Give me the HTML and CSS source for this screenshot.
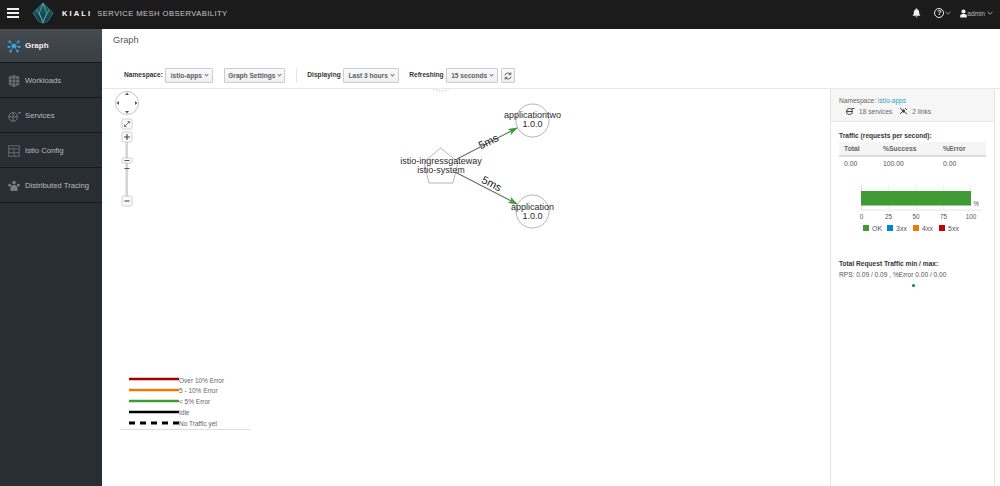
FILE: index.html
```html
<!DOCTYPE html>
<html lang="en">
<head>
    <meta charset="UTF-8">
    <meta name="viewport" content="width=device-width, initial-scale=1.0">
    <title>Kiali Console</title>
    <link rel="stylesheet" href="styles.css">
</head>
<body>
    <!-- Top bar -->
    <header class="topbar">
        <div class="hamburger"><span></span><span></span><span></span></div>
        <svg class="logo" width="22" height="22" viewBox="0 0 24 24">
            <defs>
                <linearGradient id="logoFill" x1="0" y1="0" x2="0" y2="1">
                    <stop offset="0" stop-color="#1d6a70"/>
                    <stop offset="1" stop-color="#16313a"/>
                </linearGradient>
            </defs>
            <path d="M12 1 L23 12 L17 21 L12 23 L7 21 L1 12 Z" fill="url(#logoFill)" stroke="#3a8c8f" stroke-width="0.8"/>
            <path d="M12 1 L8 12 L12 23 L16 12 Z M5 8 L12 21 L19 8" fill="none" stroke="#5fc0bc" stroke-width="0.7"/>
        </svg>
        <span class="brand">KIALI</span>
        <span class="brand-sub">SERVICE MESH OBSERVABILITY</span>
        <div class="topbar-right">
            <svg class="bell" width="9" height="10" viewBox="0 0 10 11">
                <path d="M5 0.5 C5.8 0.5 6 1 6 1.5 C7.5 2 8 3.2 8 5 C8 7 8.6 7.8 9.5 8.6 H0.5 C1.4 7.8 2 7 2 5 C2 3.2 2.5 2 4 1.5 C4 1 4.2 0.5 5 0.5 Z M3.8 9.4 H6.2 C6.1 10.2 5.6 10.6 5 10.6 C4.4 10.6 3.9 10.2 3.8 9.4 Z" fill="#f2f2f2"/>
            </svg>
            <span class="help">?</span>
            <svg class="caret help-caret" width="6" height="4" viewBox="0 0 6 4"><path d="M0.5 0.8 L3 3.2 L5.5 0.8" fill="none" stroke="#bbb" stroke-width="0.8"/></svg>
            <svg class="user" width="7" height="9" viewBox="0 0 9 11">
                <circle cx="4.5" cy="3" r="2.6" fill="#f2f2f2"/>
                <path d="M0.3 10.6 V8.4 C0.3 6.8 2 6 4.5 6 C7 6 8.7 6.8 8.7 8.4 V10.6 Z" fill="#f2f2f2"/>
            </svg>
            <span class="admin">admin</span>
            <svg class="caret" width="6" height="4" viewBox="0 0 6 4"><path d="M0.5 0.8 L3 3.2 L5.5 0.8" fill="none" stroke="#bbb" stroke-width="0.8"/></svg>
        </div>
    </header>

    <div class="layout">
        <!-- Menu kiri -->
        <nav class="sidebar">
            <a class="nav-item active">
                <svg width="16" height="16" viewBox="0 0 16 16">
                    <g stroke="#39a5dc" stroke-width="0.8"><path d="M8 8 L3 3 M8 8 L13 3 M8 8 L2 9 M8 8 L14 9 M8 8 L4 14 M8 8 L12 14"/></g>
                    <g fill="#39a5dc"><circle cx="8" cy="8" r="2.6"/><circle cx="3" cy="3" r="1.4"/><circle cx="13" cy="3" r="1.4"/><circle cx="2" cy="9" r="1.4"/><circle cx="14" cy="9" r="1.4"/><circle cx="4" cy="14" r="1.4"/><circle cx="12" cy="14" r="1.4"/></g>
                </svg>
                Graph
            </a>
            <a class="nav-item">
                <svg width="16" height="16" viewBox="0 0 16 16">
                    <path d="M8 1 L14 3 V12 L8 15 L2 12 V3 Z" fill="#6b7076"/>
                    <path d="M2 6 H14 M2 10 H14 M6 2 V14 M10 2 V14" stroke="#292e34" stroke-width="0.8"/>
                </svg>
                Workloads
            </a>
            <a class="nav-item">
                <svg width="16" height="16" viewBox="0 0 16 16" fill="none" stroke="#7b8086">
                    <circle cx="7" cy="9" r="5"/>
                    <path d="M2 9 H12 M7 4 V14"/>
                    <path d="M12.5 4.5 H16" stroke-width="1.4"/>
                </svg>
                Services
            </a>
            <a class="nav-item">
                <svg width="16" height="16" viewBox="0 0 16 16" fill="none" stroke="#6b7076">
                    <rect x="2" y="2" width="12" height="12"/>
                    <path d="M2 5.5 H14 M2 10 H14 M8 5.5 V14"/>
                </svg>
                Istio Config
            </a>
            <a class="nav-item">
                <svg width="16" height="16" viewBox="0 0 16 16" fill="#7b8086">
                    <circle cx="8" cy="4" r="2"/><circle cx="3" cy="7" r="1.6"/><circle cx="13" cy="7" r="1.6"/>
                    <path d="M8 6.5 C11 6.5 12.5 10 12 12.5 C11.5 14.5 9.5 13.5 8 13.5 C6.5 13.5 4.5 14.5 4 12.5 C3.5 10 5 6.5 8 6.5 Z"/>
                </svg>
                Distributed Tracing
            </a>
        </nav>

        <main class="content">
            <h1 class="page-title">Graph</h1>

            <!-- Toolbar -->
            <div class="toolbar">
                <label class="tb-label">Namespace:</label>
                <button class="select w-ns">istio-apps <i class="chev"></i></button>
                <button class="select w-settings">Graph Settings <i class="chev"></i></button>
                <span class="divider"></span>
                <label class="tb-label">Displaying</label>
                <button class="select w-display">Last 3 hours <i class="chev"></i></button>
                <label class="tb-label tb-refresh">Refreshing</label>
                <button class="select w-refresh">15 seconds <i class="chev"></i></button>
                <button class="select icon-btn">
                    <svg width="8" height="8" viewBox="0 0 8 8" fill="none" stroke="#555" stroke-width="0.9">
                        <path d="M1 3.4 A3 3 0 0 1 6.4 2.2 M7 4.6 A3 3 0 0 1 1.6 5.8"/>
                        <path d="M6.8 0.4 V2.6 H4.6 M1.2 7.6 V5.4 H3.4"/>
                    </svg>
                </button>
            </div>

            <div class="graph-area">
                <div class="canvas">
                    <svg class="graph" width="728" height="397" viewBox="102 89 728 397">
                        <defs>
                            <marker id="arrow" markerWidth="10" markerHeight="7" refX="9" refY="3.5" orient="auto" markerUnits="userSpaceOnUse">
                                <path d="M0 0 L10 3.5 L0 7 L2.5 3.5 Z" fill="#3f9c35"/>
                            </marker>
                        </defs>

                        <!-- node terpotong di atas -->
                        <circle cx="441" cy="76" r="15" fill="none" stroke="#bbb" stroke-dasharray="1.5 1.5"/>

                        <!-- panzoom -->
                        <circle cx="127" cy="103" r="11.5" fill="#fff" stroke="#c4c4c4"/>
                        <path d="M127 92.5 L129 95 H125 Z M127 113.5 L129 111 H125 Z M116.5 103 L119 101 V105 Z M137.5 103 L135 101 V105 Z" fill="#555"/>
                        <rect class="pz-btn" x="122" y="119" width="10" height="10" rx="1.5"/>
                        <path d="M124.5 126.5 L129.5 121.5 M124.5 124.5 V126.5 H126.5 M127.5 121.5 H129.5 V123.5" fill="none" stroke="#444" stroke-width="0.7"/>
                        <rect x="125.5" y="142" width="2.4" height="54" fill="#d2d2d2"/>
                        <rect class="pz-btn" x="122" y="132" width="10" height="10" rx="1.5"/>
                        <path d="M124 137 H130 M127 134 V140" stroke="#444" stroke-width="1.1"/>
                        <rect class="pz-btn" x="122" y="158" width="10" height="5" rx="1.5"/>
                        <path d="M124.5 160.5 H129.5 M124.5 168.5 H129.5" stroke="#555"/>
                        <rect class="pz-btn" x="122" y="196" width="10" height="10" rx="1.5"/>
                        <path d="M124.5 201 H129.5" stroke="#444" stroke-width="1.1"/>

                        <!-- edges -->
                        <line x1="457" y1="159" x2="517" y2="128" stroke="#5e7a5a" stroke-width="1.1" marker-end="url(#arrow)"/>
                        <line x1="455" y1="172" x2="517" y2="204" stroke="#5e7a5a" stroke-width="1.1" marker-end="url(#arrow)"/>

                        <!-- nodes -->
                        <path d="M440.5 148 L458 162 L453 183 L429 183 L424 162 Z" fill="none" stroke="#b5b5b5"/>
                        <circle cx="532.5" cy="120.5" r="16.5" fill="none" stroke="#b5b5b5"/>
                        <circle cx="532.5" cy="211.5" r="16.5" fill="none" stroke="#b5b5b5"/>

                        <g class="node-label">
                            <text x="441" y="164">istio-ingressgateway</text>
                            <text x="441" y="173">istio-system</text>
                            <text x="532.5" y="118">applicationtwo</text>
                            <text x="532.5" y="127">1.0.0</text>
                            <text x="532.5" y="210">application</text>
                            <text x="532.5" y="219">1.0.0</text>
                        </g>
                        <text class="edge-label" transform="translate(490 145) rotate(-26)">5ms</text>
                        <text class="edge-label" transform="translate(490 187) rotate(27)">5ms</text>

                        <!-- legenda -->
                        <g stroke-width="2.4">
                            <line x1="129" y1="379" x2="179" y2="379" stroke="#a30000"/>
                            <line x1="129" y1="390" x2="179" y2="390" stroke="#ec7a08"/>
                            <line x1="129" y1="401" x2="179" y2="401" stroke="#3f9c35"/>
                            <line x1="129" y1="412" x2="179" y2="412" stroke="#000"/>
                            <line x1="129" y1="423" x2="179" y2="423" stroke="#000" stroke-width="3" stroke-dasharray="6 5"/>
                        </g>
                        <g class="legend-text">
                            <text x="179" y="382.5">Over 10% Error</text>
                            <text x="179" y="393">5 - 10% Error</text>
                            <text x="179" y="404">&lt; 5% Error</text>
                            <text x="179" y="415">Idle</text>
                            <text x="179" y="426">No Traffic yet</text>
                        </g>
                        <line x1="120" y1="429.5" x2="250" y2="429.5" stroke="#ddd"/>
                    </svg>
                </div>

                <!-- Panel kanan -->
                <aside class="summary">
                    <div class="summary-head">
                        <p class="ns-line">Namespace: <a class="link">istio-apps</a></p>
                        <p class="count-line">
                            <svg width="10" height="8" viewBox="0 0 9 8" fill="none" stroke="#444"><circle cx="4" cy="4.5" r="3"/><path d="M1 4.5 H7 M6 1.5 H9" /></svg>
                            <span class="count-services">18 services</span>
                            <svg width="9" height="8" viewBox="0 0 9 8" stroke="#444" fill="#444"><path d="M1 1 L8 7 M1 7 L4 4 M6 1 L8 3"/><circle cx="4.5" cy="4" r="1.2"/></svg>
                            <span class="count-links">2 links</span>
                        </p>
                    </div>
                    <div class="summary-body">
                        <h3 class="sec-title">Traffic (requests per second):</h3>
                        <div class="traffic-table">
                            <div class="row head"><span>Total</span><span>%Success</span><span>%Error</span></div>
                            <div class="row"><span>0.00</span><span>100.00</span><span>0.00</span></div>
                        </div>

                        <svg class="bar-chart" width="155" height="72" viewBox="839 173 155 72">
                            <path d="M861.5 184 V209 H981" fill="none" stroke="#e4e4e4"/>
                            <path d="M888.5 184 V209 M916.5 184 V209 M943.5 184 V209 M970.5 184 V209" stroke="#f0f0f0"/>
                            <rect x="861" y="190" width="110" height="14.5" fill="#3f9c35"/>
                            <g class="axis">
                                <text x="861.5" y="218">0</text>
                                <text x="888.5" y="218">25</text>
                                <text x="916" y="218">50</text>
                                <text x="943.5" y="218">75</text>
                                <text x="971" y="218">100</text>
                                <text x="976" y="205">%</text>
                            </g>
                            <g class="chart-legend">
                                <rect x="863" y="224" width="6" height="6" fill="#3f9c35"/><text x="872" y="229.5">OK</text>
                                <rect x="887" y="224" width="6" height="6" fill="#0088ce"/><text x="896" y="229.5">3xx</text>
                                <rect x="913" y="224" width="6" height="6" fill="#ec7a08"/><text x="922" y="229.5">4xx</text>
                                <rect x="939" y="224" width="6" height="6" fill="#cc0000"/><text x="948" y="229.5">5xx</text>
                            </g>
                        </svg>

                        <h3 class="sec-title rps-title">Total Request Traffic min / max:</h3>
                        <p class="rps-line">RPS: 0.09 / 0.09 , %Error 0.00 / 0.00</p>
                        <div class="spark"><span class="dot"></span></div>
                    </div>
                </aside>
            </div>
        </main>
    </div>
</body>
</html>
```

FILE: styles.css
```css
/* Umum */
html, body { height: 100%; }
body { margin: 0; background-color: #fff; font-family: "Liberation Sans", Arial, sans-serif; color: #363636; overflow: hidden; }
p, h1, h3 { margin: 0; }

/* Top bar */
.topbar { display: flex; align-items: center; height: 29px; box-sizing: border-box; padding: 0 7px 3px 7px; background-color: #1b1b1b; color: #eee; }
.hamburger { display: flex; flex-direction: column; gap: 2.6px; width: 12px; }
.hamburger span { display: block; height: 1.5px; background-color: #f0f0f0; }
.logo { margin-left: 13px; }
.brand { margin-left: 8px; font-size: 7.5px; font-weight: bold; letter-spacing: 2.15px; color: #fff; }
.brand-sub { margin-left: 5px; font-size: 7.6px; letter-spacing: 0.45px; color: #c9c9c9; }
.topbar-right { display: flex; align-items: center; margin-left: auto; }
.help { display: inline-block; width: 8px; height: 8px; margin-left: 13px; border: 1px solid #eee; border-radius: 50%; font-size: 7px; line-height: 8px; text-align: center; color: #eee; font-weight: bold; }
.help-caret { margin: 0 9px 0 1px; }
.admin { font-size: 6.5px; color: #bdbdbd; margin: 0 2px 0 0; }

.layout { display: flex; height: 457px; }

/* Sidebar */
.sidebar { width: 102px; flex-shrink: 0; background-color: #292e34; }
.nav-item { display: flex; align-items: center; gap: 8px; box-sizing: border-box; height: 35px; padding: 1px 0 0 6px; border-bottom: 1px solid #17191c; font-size: 7.7px; color: #b9bcbf; }
.nav-item svg { flex-shrink: 0; width: 14px; height: 14px; margin-right: -4px; margin-left: 1px; }
.nav-item.active { height: 34px; padding-top: 0; background: linear-gradient(#464b51, #393e44); color: #f2f2f2; font-weight: bold; font-size: 8px; }

/* Konten */
.content { flex: 1; display: flex; flex-direction: column; min-width: 0; }
.page-title { height: 37px; padding: 5px 0 0 11px; box-sizing: border-box; font-size: 9.2px; line-height: 12px; font-weight: normal; color: #555; }
.toolbar { display: flex; align-items: flex-start; box-sizing: border-box; height: 23px; padding: 2px 0 0 22px; border-bottom: 1px solid #e8e8e8; }
.tb-label { font-size: 6.6px; line-height: 13px; font-weight: bold; color: #363636; margin-right: 2.5px; }
.tb-refresh { margin-left: 10px; }
.select { display: inline-flex; align-items: center; justify-content: center; gap: 3px; height: 15px; padding: 0; border: 1px solid #ccc; border-radius: 1px; background: linear-gradient(#fafafa, #efefef); font-family: inherit; font-size: 6.6px; font-weight: bold; color: #5c6066; }
.chev { display: inline-block; width: 2px; height: 2px; margin-top: -1.5px; border-right: 0.7px solid #777; border-bottom: 0.7px solid #777; transform: rotate(45deg); }
.w-ns { width: 48px; margin-right: 11px; }
.w-settings { width: 61px; }
.divider { width: 1px; height: 15px; margin: 0 10px 0 11px; background-color: #e6e6e6; }
.w-display { width: 56px; }
.w-refresh { width: 52px; margin-right: 3px; }
.icon-btn { width: 14px; }

.graph-area { flex: 1; display: flex; min-height: 0; }
.canvas { width: 728px; flex-shrink: 0; }
.graph { display: block; }
.pz-btn { fill: #fafafa; stroke: #c4c4c4; stroke-width: 0.8; }
.node-label text { font-size: 9px; text-anchor: middle; fill: #2a2a2a; }
.edge-label { font-size: 11px; text-anchor: middle; fill: #222; }
.legend-text text { font-size: 6.5px; fill: #666; }

/* Panel kanan */
.summary { width: 165px; box-sizing: border-box; border-left: 1px solid #e2e2e2; border-right: 1px solid #e2e2e2; font-size: 6.6px; }
.summary-head { height: 33px; box-sizing: border-box; padding: 8px 0 0 8px; background-color: #f6f6f6; border-bottom: 1px solid #e6e6e6; color: #666; }
.link { color: #2a9fd0; }
.count-line { display: flex; align-items: center; gap: 4px; margin-top: 3px; padding-left: 6px; white-space: nowrap; }
.count-services { margin-right: 3px; }
.summary-body { padding: 10px 8px 0; }
.sec-title { font-size: 6.6px; font-weight: bold; color: #363636; }
.traffic-table { margin-top: 3px; width: 147px; color: #555; font-size: 6.8px; }
.row { display: grid; grid-template-columns: 39px 60px 1fr; padding-left: 5px; height: 13px; align-items: center; }
.row.head { background-color: #f5f5f5; border-bottom: 2px solid #ddd; font-weight: bold; color: #666; }
.bar-chart { display: block; margin: 4px 0 0 0; }
.axis text { font-size: 6.4px; fill: #555; text-anchor: middle; }
.chart-legend text { font-size: 7px; fill: #555; }
.rps-title { margin-top: 14px; }
.rps-line { margin-top: 4px; color: #555; }
.spark { margin-top: 6px; padding-left: 73px; }
.dot { display: block; width: 3px; height: 3px; border-radius: 50%; background-color: #007a87; }
```
